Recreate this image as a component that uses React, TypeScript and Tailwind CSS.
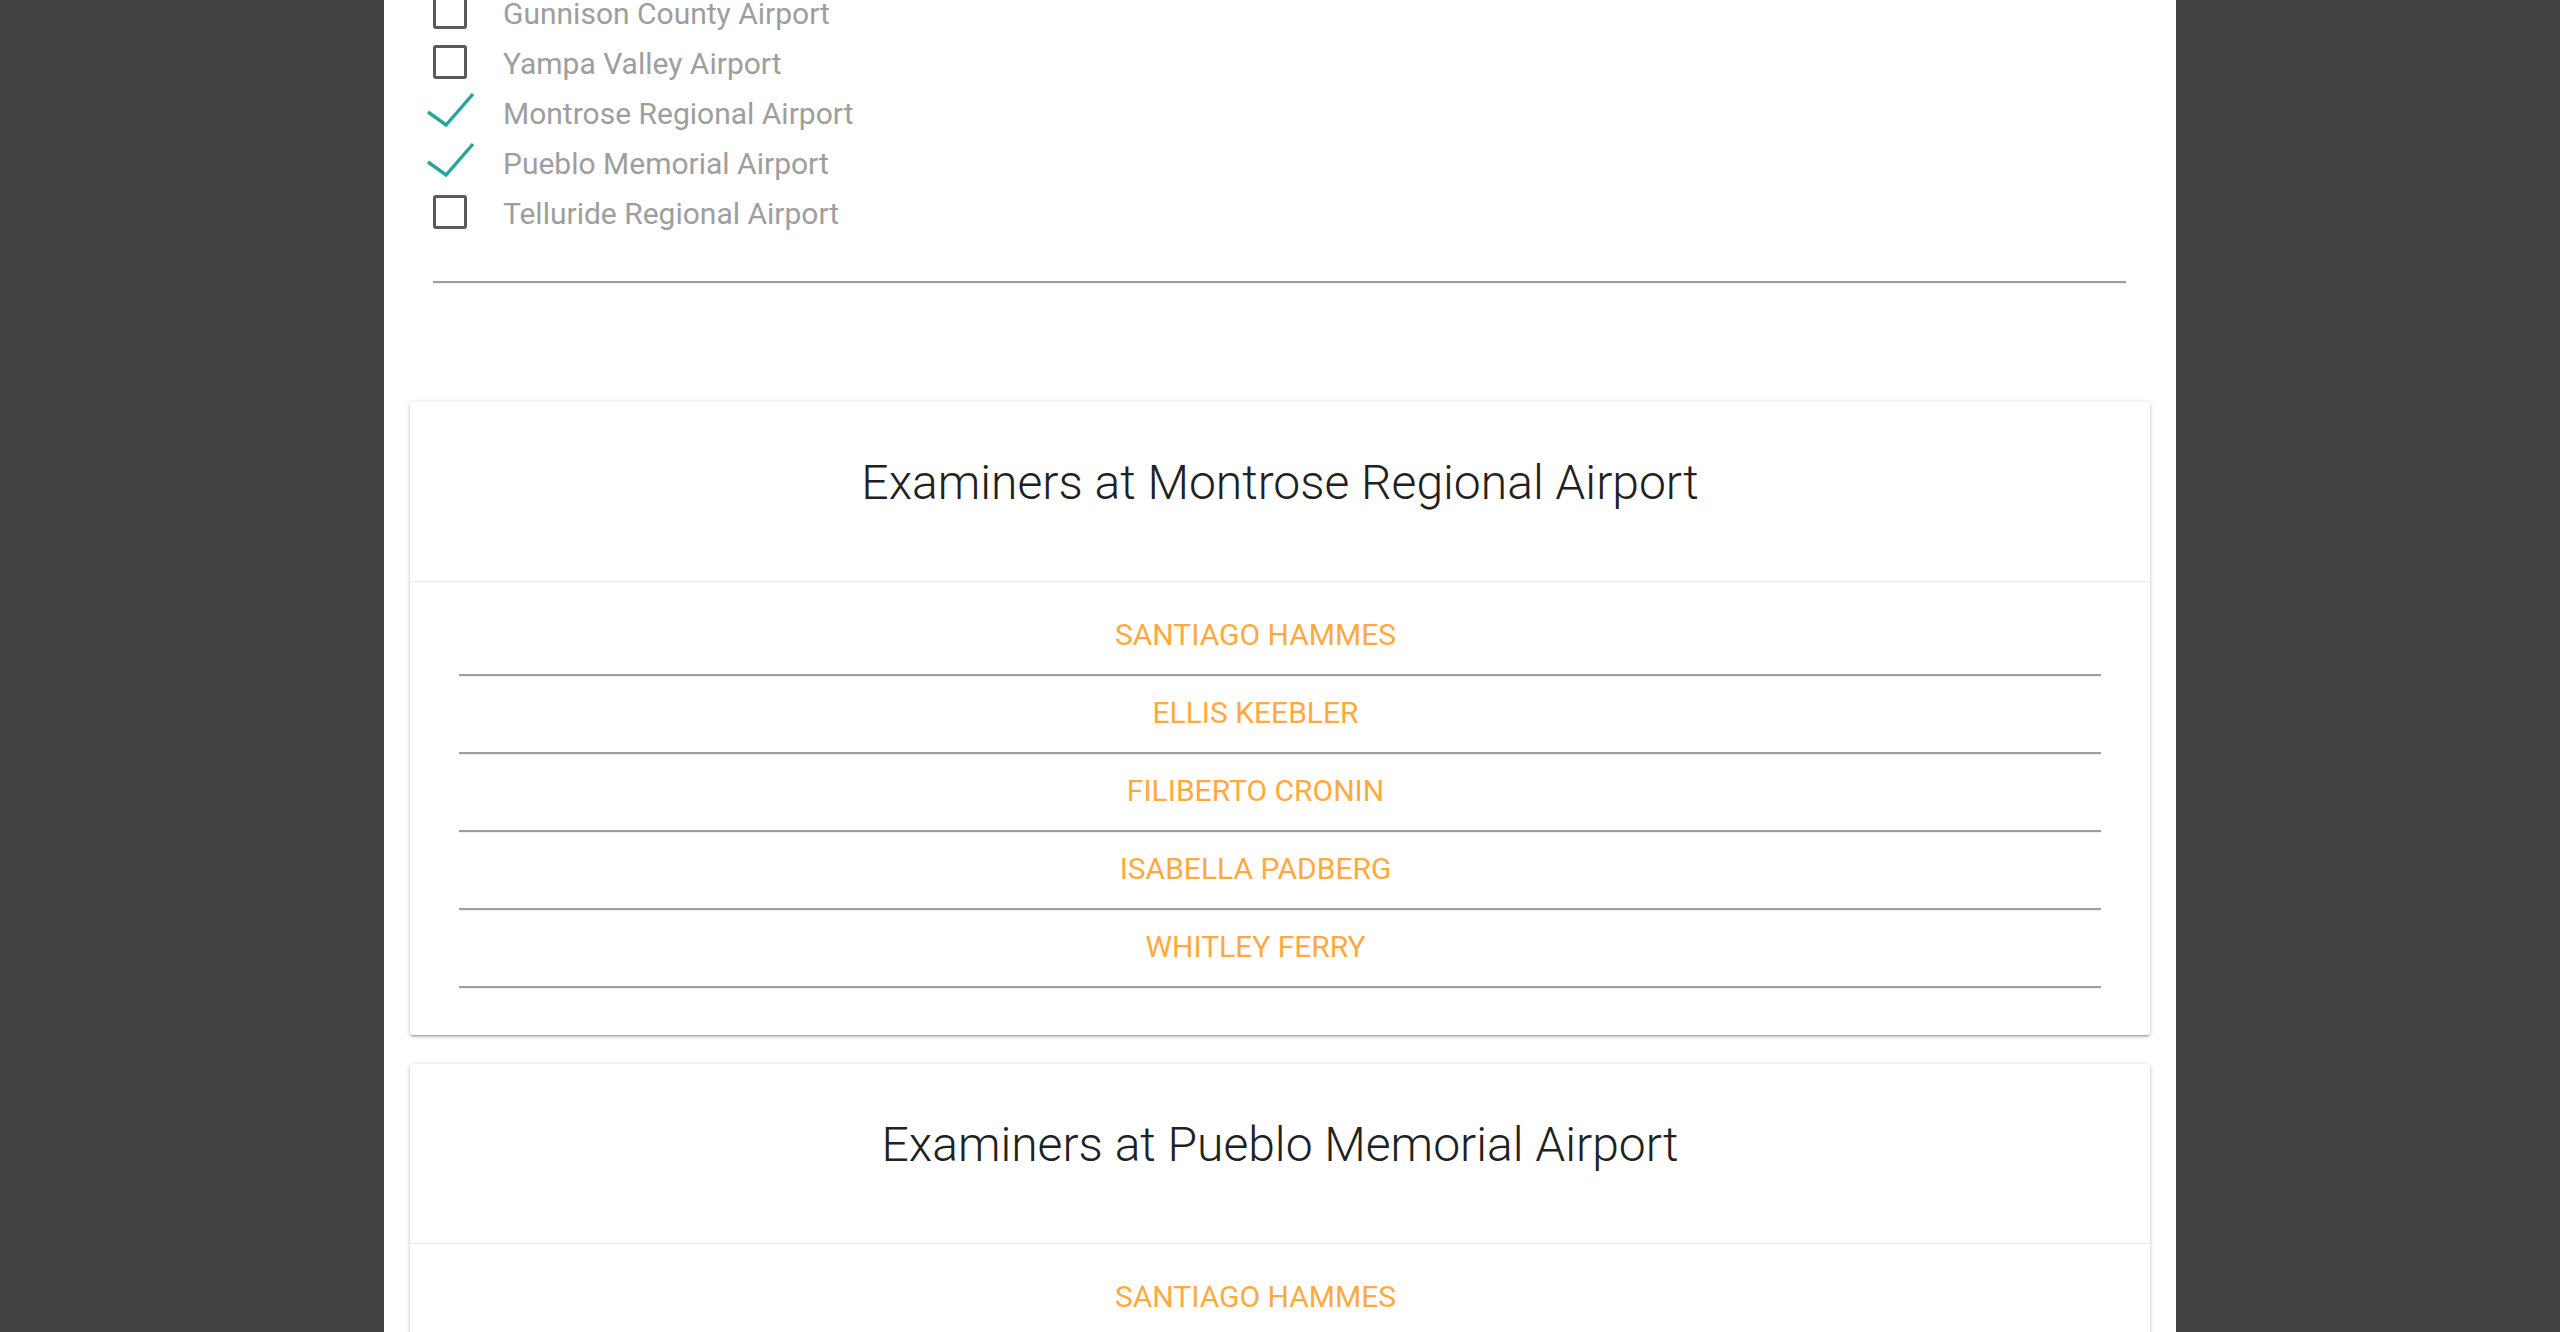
import React from "react";

const airports = [
  { name: "Gunnison County Airport", checked: false },
  { name: "Yampa Valley Airport", checked: false },
  { name: "Montrose Regional Airport", checked: true },
  { name: "Pueblo Memorial Airport", checked: true },
  { name: "Telluride Regional Airport", checked: false },
];

const examiners = [
  "Santiago Hammes",
  "Ellis Keebler",
  "Filiberto Cronin",
  "Isabella Padberg",
  "Whitley Ferry",
];

function CheckBox({ checked }: { checked: boolean }) {
  if (checked) {
    return (
      <svg width="34" height="34" viewBox="0 0 34 34" overflow="visible" className="shrink-0">
        <polyline
          points="-5,17 13,30 40,-1"
          fill="none"
          stroke="#26a69a"
          strokeWidth="3.4"
        />
      </svg>
    );
  }
  return <div className="w-[34px] h-[34px] shrink-0 rounded-[3px] border-[3px] border-[#5a5a5a]" />;
}

function Divider() {
  return <div className="h-[3px] border-t-2 border-[#9e9e9e] border-b border-b-[#eeeeee]" />;
}

function ExaminerCard({ airport }: { airport: string }) {
  return (
    <div className="bg-white rounded-[3px] shadow-[0_2px_2px_0_rgba(0,0,0,0.14),0_3px_1px_-2px_rgba(0,0,0,0.12),0_1px_5px_0_rgba(0,0,0,0.2)]">
      <div className="pt-[53px] pb-[70px] border-b border-[#e8e8e8] text-center">
        <h2 className="text-[48px] leading-[56px] font-light text-[#212121]">
          Examiners at {airport}
        </h2>
      </div>
      <ul className="px-[49px] pt-[17px] pb-[46px]">
        {examiners.map((e) => (
          <li key={e}>
            <div className="pt-[18px] pb-[21px] pr-[49px] text-center text-[30px] leading-[36px] uppercase text-[#ffa940]">
              {e}
            </div>
            <Divider />
          </li>
        ))}
      </ul>
    </div>
  );
}

export default function App() {
  return (
    <div className="min-h-screen bg-[#424242] font-['Roboto',sans-serif]">
      <div className="w-[1792px] mx-auto bg-white min-h-screen overflow-hidden">
        <div className="px-[49px] pr-[50px]">
          <div className="-mt-[13px]">
            {airports.map((a) => (
              <div key={a.name} className="h-[50px] flex items-center gap-[36px]">
                <CheckBox checked={a.checked} />
                <span className="pt-[2px] text-[30px] text-[#9e9e9e]">{a.name}</span>
              </div>
            ))}
          </div>
          <div className="mt-[44px]">
            <Divider />
          </div>
        </div>
        <div className="px-[26px] pt-[118px] flex flex-col gap-[29px] pb-[40px]">
          <ExaminerCard airport="Montrose Regional Airport" />
          <ExaminerCard airport="Pueblo Memorial Airport" />
        </div>
      </div>
    </div>
  );
}
